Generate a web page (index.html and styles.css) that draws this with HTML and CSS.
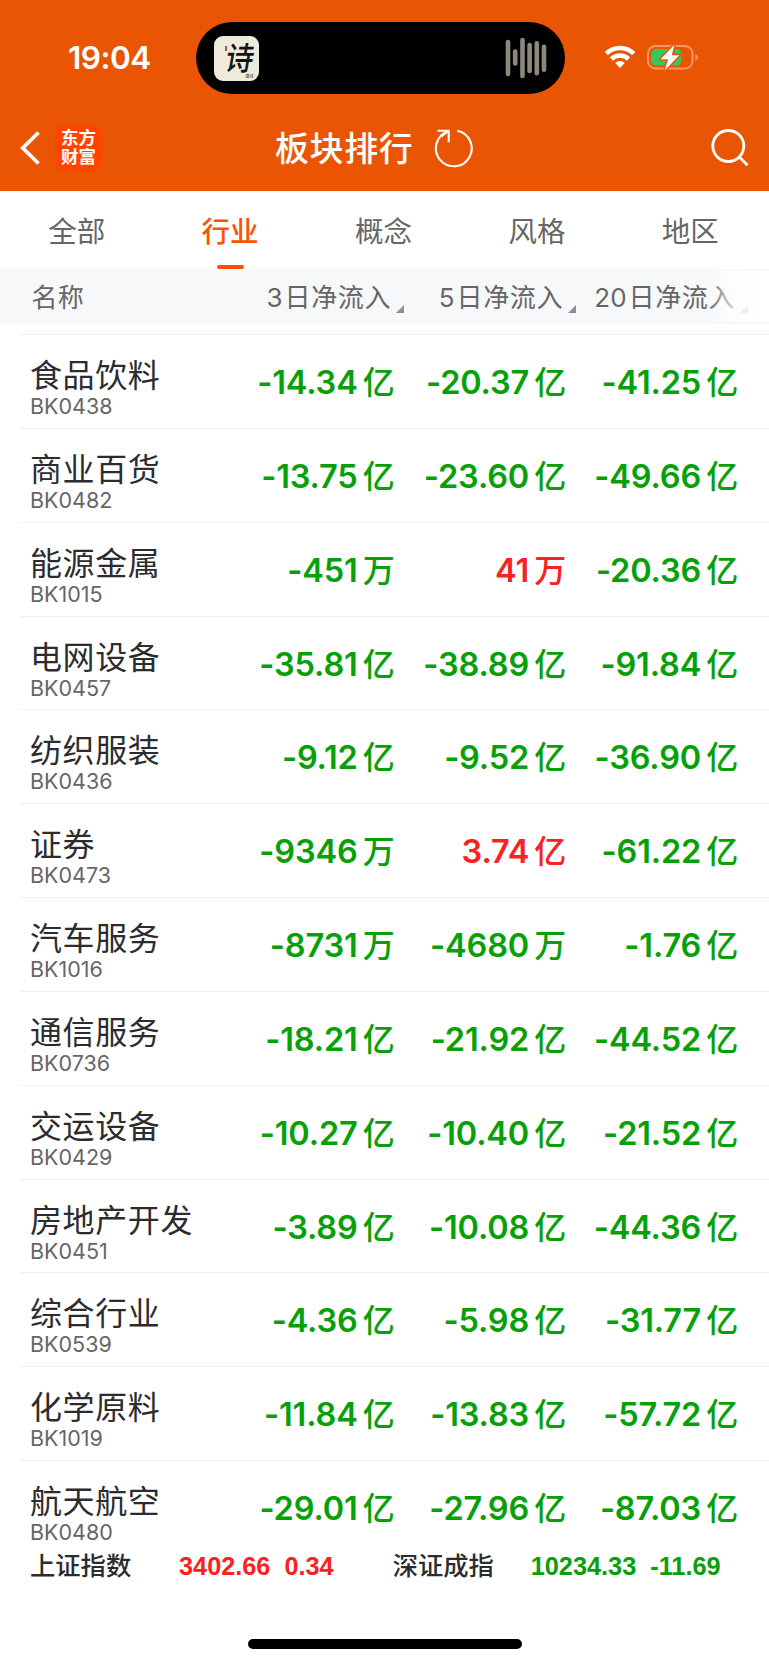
FILE: index.html
```html
<!DOCTYPE html>
<html lang="zh-CN">
<head>
  <meta charset="UTF-8">
  <meta name="viewport" content="width=device-width, initial-scale=1.0">
  <title>板块排行</title>
  <link rel="stylesheet" href="styles.css">
</head>
<body>
  <header class="header">
    <div class="status">
      <span class="time">19:04</span>
      <div class="island">
        <div class="poem"><span>诗</span><i></i><small>唐诗</small></div>
        <svg class="wave" width="42" height="42" viewBox="0 0 42 42" stroke="#8e887c" stroke-width="4.6" stroke-linecap="round">
          <path d="M3 5v32M10.2 14.500v12M17.500 3v36M24.600 8v26M31.800 6.200v30M39 9.700v23"/>
        </svg>
      </div>
      <svg class="wifi" width="32" height="25" viewBox="0 0 32 25">
        <g fill="none" stroke="#fff" stroke-width="4.600">
          <path d="M2.300 8.600a19.500 19.500 0 0 1 27.400 0"/>
          <path d="M7.400 14a12.300 12.300 0 0 1 17.200 0"/>
        </g>
        <path d="M11.300 18a6.800 6.800 0 0 1 9.400 0L16 23z" fill="#fff"/>
      </svg>
      <svg class="battery" width="52" height="28" viewBox="0 0 52 28">
        <rect x="1" y="3" width="44.500" height="22.500" rx="7.500" fill="none" stroke="#f39a68" stroke-width="1.900"/>
        <path d="M48.300 10.800v7q2.600-1 2.600-3.500t-2.600-3.500z" fill="#f39a68"/>
        <rect x="4" y="6" width="30.500" height="16.500" rx="4.800" fill="#34c759"/>
        <path d="M27.500 1.500L13.500 16.200h7.600l-3.400 11.300 14.600-15.300h-7.600z" fill="#fff" stroke="#ea5504" stroke-width="3.200" paint-order="stroke" stroke-linejoin="round"/>
      </svg>
    </div>
    <div class="nav">
      <svg class="back" width="20" height="36" viewBox="0 0 20 36" fill="none" stroke="#fff" stroke-width="3.800">
        <path d="M18.500 2.500L2.800 18l15.700 15.500"/>
      </svg>
      <div class="logo">东方<br>财富</div>
      <h1>板块排行</h1>
      <svg class="refresh" width="40" height="40" viewBox="0 0 40 40" fill="none" stroke="#fff" stroke-width="2.100">
        <path d="M24.200 2.800A17.900 17.900 0 1 1 14.600 3.600"/>
        <path d="M4.500 2.700h11.200v11.500M15.700 2.700L8.500 8.300"/>
      </svg>
      <svg class="search" width="40" height="40" viewBox="0 0 40 40" fill="none" stroke="#fff" stroke-width="2.800">
        <circle cx="18.300" cy="18" r="15.500"/>
        <path d="M29 28.700l8.500 8.500"/>
      </svg>
    </div>
  </header>

  <nav class="tabs">
    <span>全部</span>
    <span class="active">行业</span>
    <span>概念</span>
    <span>风格</span>
    <span>地区</span>
  </nav>

  <div class="thead">
    <span class="name">名称</span>
    <span class="sort"><b>3</b>日净流入</span>
    <span class="sort"><b>5</b>日净流入</span>
    <span class="sort"><b>20</b>日净流入</span>
    <div class="fade"></div>
  </div>

  <main class="list">
    <div class="row"><div class="name">食品饮料<small>BK0438</small></div><span>-14.34<i>亿</i></span><span>-20.37<i>亿</i></span><span>-41.25<i>亿</i></span></div>
    <div class="row"><div class="name">商业百货<small>BK0482</small></div><span>-13.75<i>亿</i></span><span>-23.60<i>亿</i></span><span>-49.66<i>亿</i></span></div>
    <div class="row"><div class="name">能源金属<small>BK1015</small></div><span>-451<i>万</i></span><span class="up">41<i>万</i></span><span>-20.36<i>亿</i></span></div>
    <div class="row"><div class="name">电网设备<small>BK0457</small></div><span>-35.81<i>亿</i></span><span>-38.89<i>亿</i></span><span>-91.84<i>亿</i></span></div>
    <div class="row"><div class="name">纺织服装<small>BK0436</small></div><span>-9.12<i>亿</i></span><span>-9.52<i>亿</i></span><span>-36.90<i>亿</i></span></div>
    <div class="row"><div class="name">证券<small>BK0473</small></div><span>-9346<i>万</i></span><span class="up">3.74<i>亿</i></span><span>-61.22<i>亿</i></span></div>
    <div class="row"><div class="name">汽车服务<small>BK1016</small></div><span>-8731<i>万</i></span><span>-4680<i>万</i></span><span>-1.76<i>亿</i></span></div>
    <div class="row"><div class="name">通信服务<small>BK0736</small></div><span>-18.21<i>亿</i></span><span>-21.92<i>亿</i></span><span>-44.52<i>亿</i></span></div>
    <div class="row"><div class="name">交运设备<small>BK0429</small></div><span>-10.27<i>亿</i></span><span>-10.40<i>亿</i></span><span>-21.52<i>亿</i></span></div>
    <div class="row"><div class="name">房地产开发<small>BK0451</small></div><span>-3.89<i>亿</i></span><span>-10.08<i>亿</i></span><span>-44.36<i>亿</i></span></div>
    <div class="row"><div class="name">综合行业<small>BK0539</small></div><span>-4.36<i>亿</i></span><span>-5.98<i>亿</i></span><span>-31.77<i>亿</i></span></div>
    <div class="row"><div class="name">化学原料<small>BK1019</small></div><span>-11.84<i>亿</i></span><span>-13.83<i>亿</i></span><span>-57.72<i>亿</i></span></div>
    <div class="row"><div class="name">航天航空<small>BK0480</small></div><span>-29.01<i>亿</i></span><span>-27.96<i>亿</i></span><span>-87.03<i>亿</i></span></div>
  </main>

  <footer class="footer">
    <span class="index">上证指数</span>
    <span class="quote up">3402.66</span>
    <span class="quote up">0.34</span>
    <span class="index second">深证成指</span>
    <span class="quote">10234.33</span>
    <span class="quote">-11.69</span>
  </footer>
  <div class="home"></div>
</body>
</html>
```
FILE: styles.css
```css
* {
  box-sizing: border-box;
}
body {
  margin: 0;
  height: 1665px;
  overflow: hidden;
  background: #fff;
  color: #2c2c2e;
  font-family: Inter, "Noto Sans CJK SC", sans-serif;
  white-space: nowrap;
  display: flex;
  flex-direction: column;
}
svg {
  display: block;
  flex: none;
}

/* header */
.header {
  height: 191px;
  flex: none;
  background: #ea5504;
  color: #fff;
  padding-top: 22px;
}
.status {
  height: 72px;
  display: flex;
  align-items: center;
}
.time {
  width: 128px;
  margin-left: 68px;
  font-size: 31.5px;
  font-weight: 600;
  line-height: 40px;
  letter-spacing: -0.5px;
  padding-bottom: 1px;
}
.island {
  width: 369px;
  height: 72px;
  border-radius: 36px;
  background: #000;
  padding: 0 18px 0 17.5px;
  display: flex;
  align-items: center;
  justify-content: space-between;
}
.poem {
  width: 45px;
  height: 45px;
  border-radius: 9px;
  background: #eeebdc;
  color: #161616;
  position: relative;
  overflow: hidden;
}
.poem span {
  position: absolute;
  left: 12px;
  top: 4px;
  font-size: 28px;
  line-height: 36px;
  font-weight: 500;
  transform: skewX(-10deg) scaleY(1.15);
}
.poem i {
  position: absolute;
  left: 11px;
  top: 10px;
  width: 2px;
  height: 5px;
  background: #b5524a;
}
.poem small {
  position: absolute;
  right: 5px;
  bottom: 2px;
  font-size: 4px;
  line-height: 5px;
}
.wifi {
  margin: 0 0 2px 39px;
}
.battery {
  margin: 0 0 2px 11px;
}
.nav {
  height: 97px;
  display: flex;
  align-items: center;
  padding: 8px 19px 0 20px;
}
.nav h1 {
  width: 140px;
  margin: 4px 0 0 174px;
  font-size: 34px;
  line-height: 50px;
  font-weight: 500;
  letter-spacing: 0.6px;
}
.back {
  margin-top: 3px;
}
.logo {
  width: 46px;
  height: 46px;
  margin: 2px 0 0 15px;
  padding: 3px 0 0 6px;
  border-radius: 9px;
  background: #ff4400;
  font-size: 17.500px;
  line-height: 19.500px;
  font-weight: 700;
}
.refresh {
  margin: 2px 0 0 18px;
}
.search {
  margin: 2px 0 0 auto;
}

/* tabs */
.tabs {
  height: 78px;
  flex: none;
  display: grid;
  grid-template-columns: repeat(5, 1fr);
  margin-right: 2px;
  text-align: center;
  color: #666;
  font-size: 28.500px;
  line-height: 81px;
}
.tabs .active {
  color: #f95400;
  font-weight: 500;
  position: relative;
}
.tabs .active::after {
  content: "";
  position: absolute;
  left: 50%;
  top: 74px;
  width: 27px;
  height: 4px;
  margin-left: -13px;
  border-radius: 2px;
  background: #ff5000;
}

/* table head */
.thead {
  height: 55px;
  flex: none;
  display: grid;
  grid-template-columns: 232px 172px 172px 172px;
  grid-template-rows: 55px;
  position: relative;
  background: #f7f8fa;
  color: #666;
  font-size: 26px;
  line-height: 57px;
}
.thead .name {
  padding-left: 31.5px;
  letter-spacing: 0.3px;
}
.sort {
  display: flex;
  justify-content: flex-end;
  letter-spacing: 0.6px;
}
.sort b {
  font-weight: 400;
  letter-spacing: 0;
  margin-right: 2px;
}
.sort::after {
  content: "";
  align-self: flex-end;
  margin: 0 0 11px 5px;
  border-left: 8px solid transparent;
  border-bottom: 8px solid #8f8f93;
}
.fade {
  position: absolute;
  top: 2px;
  right: 0;
  width: 62px;
  height: 51px;
  background: linear-gradient(90deg, rgba(255, 255, 255, 0), rgba(255, 255, 255, 0.75) 45%, #fff 90%);
}

/* list */
.list {
  margin-top: 10px;
  flex: none;
}
.row {
  height: 93.85px;
  margin-left: 20px;
  border-top: 1px solid #efeff1;
  display: grid;
  grid-template-columns: 203px 171.500px 171.500px 172px;
  grid-template-rows: 92.85px;
  color: #08a008;
  font-size: 32.500px;
  font-weight: 600;
  line-height: 96px;
}
.row span {
  display: flex;
  justify-content: flex-end;
  letter-spacing: -0.15px;
}
.row i {
  margin-left: 5px;
  font-style: normal;
  font-weight: 500;
  font-size: 32px;
}
.row .up,
.quote.up {
  color: #f82222;
}
.row .name {
  padding: 20px 0 0 10px;
  color: #2c2c2e;
  font-size: 32px;
  font-weight: 400;
  line-height: 42px;
  letter-spacing: 0.6px;
}
.row small {
  display: block;
  margin-top: -2px;
  color: #666;
  font-size: 21.500px;
  line-height: 23px;
  letter-spacing: 0;
}

/* bottom */
.footer {
  height: 44px;
  margin-top: -10px;
  flex: none;
  display: flex;
  align-items: center;
  padding-left: 30px;
  background: #fff;
  position: relative;
}
.index {
  width: 149px;
  font-size: 25.300px;
  line-height: 44px;
  font-weight: 500;
}
.index.second {
  width: 138px;
  margin-left: 59px;
}
.quote {
  color: #08a008;
  font-family: "Liberation Sans", sans-serif;
  font-size: 25.300px;
  font-weight: 700;
  line-height: 44px;
}
.quote + .quote {
  margin-left: 14px;
}
.home {
  width: 274px;
  height: 10px;
  flex: none;
  margin: auto auto 16px;
  border-radius: 5px;
  background: #000;
}
```
